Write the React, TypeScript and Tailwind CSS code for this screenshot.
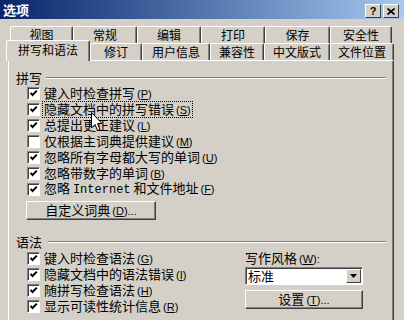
import type { ReactNode } from 'react';

const font = "font-['SimSun','Noto_Sans_CJK_SC',sans-serif]";

function Check({ checked }: { checked: boolean }) {
  return (
    <span className="flex h-[13px] w-[13px] shrink-0 items-center justify-center border border-b-white border-l-[#808080] border-r-white border-t-[#808080] bg-white shadow-[inset_1px_1px_0_#404040]">
      {checked && (
        <svg width="9" height="9" viewBox="0 0 9 9">
          <path d="M1.5 3.8 L3.6 6 L7.8 1.6" stroke="#000" strokeWidth="1.9" fill="none" />
        </svg>
      )}
    </span>
  );
}

function Row({ checked = true, children, focus }: { checked?: boolean; children: ReactNode; focus?: boolean }) {
  return (
    <div className="flex h-[16px] items-center gap-[2px] pl-[18px]">
      <Check checked={checked} />
      <span
        className={
          focus
            ? 'whitespace-nowrap border border-dotted border-black px-[1px] leading-[13px]'
            : 'whitespace-nowrap border border-transparent px-[1px] leading-[13px]'
        }
      >
        {children}
      </span>
    </div>
  );
}

function Key({ k }: { k: string }) {
  return (
    <span className="ml-[2px] font-['Liberation_Sans',sans-serif] text-[11px] leading-[13px]">
      (<u>{k}</u>)
    </span>
  );
}

function Button({ children, className }: { children: ReactNode; className: string }) {
  return (
    <div
      className={`flex h-[19px] items-center justify-center border border-b-[#404040] border-l-white border-r-[#404040] border-t-white bg-[#d4d0c8] shadow-[inset_-1px_-1px_0_#808080] ${className}`}
    >
      <span className="whitespace-nowrap leading-[13px]">{children}</span>
    </div>
  );
}

function Group({ label, line }: { label: string; line: string }) {
  return (
    <div className="flex h-[15px] items-center pl-[7px] pr-[7px]">
      <span className="leading-[14px]">{label}</span>
      <div className={`h-[2px] flex-1 border-b border-t border-b-white border-t-[#808080] ${line}`} />
    </div>
  );
}

const row1 = [
  ['视图', 'w-[63px]'],
  ['常规', 'w-[64px]'],
  ['编辑', 'w-[64px]'],
  ['打印', 'w-[64px]'],
  ['保存', 'w-[65px]'],
  ['安全性', 'w-[62px]'],
];

const row2 = [
  ['修订', 'w-[52px]'],
  ['用户信息', 'w-[68px]'],
  ['兼容性', 'w-[54px]'],
  ['中文版式', 'w-[66px]'],
  ['文件位置', 'w-[64px]'],
];

function Tab({ label, w }: { label: string; w: string }) {
  return (
    <div
      className={`flex h-[17px] items-center justify-center rounded-t-[2px] border-l border-r border-t border-l-white border-r-[#404040] border-t-white text-[12px] leading-[14px] shadow-[inset_-1px_0_0_#808080] ${w}`}
    >
      {label}
    </div>
  );
}

export default function App() {
  return (
    <div className={`relative flex h-[320px] w-[404px] flex-col overflow-hidden bg-[#d4d0c8] text-[13px] leading-[16px] text-black ${font}`}>
      <div className="flex h-[19px] shrink-0 items-center justify-between bg-gradient-to-r from-[#0a246a] to-[#a6caf0] pl-[3px] pr-[5px]">
        <span className="text-[13px] font-bold text-white">选项</span>
        <div className="flex gap-[2px] pt-[3px]">
          <div className="flex h-[14px] w-[16px] items-center justify-center border border-b-[#404040] border-l-white border-r-[#404040] border-t-white bg-[#d4d0c8] font-['Liberation_Sans',sans-serif] text-[11px] font-bold leading-none">
            ?
          </div>
          <div className="flex h-[14px] w-[16px] items-center justify-center border border-b-[#404040] border-l-white border-r-[#404040] border-t-white bg-[#d4d0c8]">
            <svg width="8" height="7" viewBox="0 0 8 7">
              <path d="M0.5 0.5 L7.5 6.5 M7.5 0.5 L0.5 6.5" stroke="#000" strokeWidth="1.6" />
            </svg>
          </div>
        </div>
      </div>

      <div className="mt-[7px] flex pl-[10px]">
        {row1.map(([l, w]) => (
          <Tab key={l} label={l} w={w} />
        ))}
      </div>
      <div className="flex h-[17px] items-end pl-[6px]">
        <div className="relative z-10 -mb-[1px] flex h-[21px] w-[84px] items-center justify-center rounded-t-[2px] border-l border-r border-t border-l-white border-r-[#404040] border-t-white bg-[#d4d0c8] pb-[2px] text-[12px] leading-[14px] shadow-[inset_-1px_0_0_#808080]">
          拼写和语法
        </div>
        {row2.map(([l, w]) => (
          <Tab key={l} label={l} w={w} />
        ))}
      </div>

      <div className="ml-[8px] w-[386px] flex-1 border-l border-r border-t border-l-white border-r-[#404040] border-t-white pt-[9px] shadow-[inset_-1px_0_0_#808080]">
        <Group label="拼写" line="ml-[4px]" />
        <Row>
          键入时检查拼写<Key k="P" />
        </Row>
        <Row focus>
          隐藏文档中的拼写错误<Key k="S" />
        </Row>
        <Row>
          总提出更正建议<Key k="L" />
        </Row>
        <Row checked={false}>
          仅根据主词典提供建议<Key k="M" />
        </Row>
        <Row>
          忽略所有字母都大写的单词<Key k="U" />
        </Row>
        <Row>
          忽略带数字的单词<Key k="B" />
        </Row>
        <Row>
          忽略 <span className="font-['Liberation_Mono',monospace] text-[12px] leading-[13px]">Internet</span> 和文件地址<Key k="F" />
        </Row>
        <Button className="ml-[17px] mt-[4px] w-[130px]">
          自定义词典<Key k="D" />
          <span className="font-['Liberation_Sans',sans-serif] text-[11px]">...</span>
        </Button>

        <div className="mt-[14px]">
          <Group label="语法" line="ml-[6px]" />
        </div>
        <div className="mt-[1px] flex">
          <div className="w-[236px]">
            <Row>
              键入时检查语法<Key k="G" />
            </Row>
            <Row>
              隐藏文档中的语法错误<Key k="I" />
            </Row>
            <Row>
              随拼写检查语法<Key k="H" />
            </Row>
            <Row>
              显示可读性统计信息<Key k="R" />
            </Row>
          </div>
          <div className="w-[118px]">
            <div className="flex h-[16px] items-center">
              <span className="whitespace-nowrap leading-[13px]">
                写作风格<Key k="W" />
                <span className="font-['Liberation_Sans',sans-serif] text-[11px]">:</span>
              </span>
            </div>
            <div className="mt-[1px] flex h-[18px] items-center border border-b-white border-l-[#808080] border-r-white border-t-[#808080] bg-white shadow-[inset_1px_1px_0_#404040]">
              <span className="flex-1 pl-[2px] leading-[14px]">标准</span>
              <div className="mr-[1px] flex h-[14px] w-[15px] items-center justify-center border border-b-[#404040] border-l-white border-r-[#404040] border-t-white bg-[#d4d0c8]">
                <svg width="7" height="4" viewBox="0 0 7 4">
                  <path d="M0 0 H7 L3.5 4 Z" fill="#000" />
                </svg>
              </div>
            </div>
            <Button className="mt-[5px] w-[118px]">
              设置<Key k="T" />
              <span className="font-['Liberation_Sans',sans-serif] text-[11px]">...</span>
            </Button>
          </div>
        </div>
      </div>

      <svg className="absolute left-[91px] top-[112px]" width="12" height="20" viewBox="0 0 12 20">
        <path d="M0.5 0.5 L0.5 16 L4 12.5 L6.5 18.5 L9 17.5 L6.5 11.5 L11 11.5 Z" fill="#fff" stroke="#000" strokeWidth="1" />
      </svg>
    </div>
  );
}
